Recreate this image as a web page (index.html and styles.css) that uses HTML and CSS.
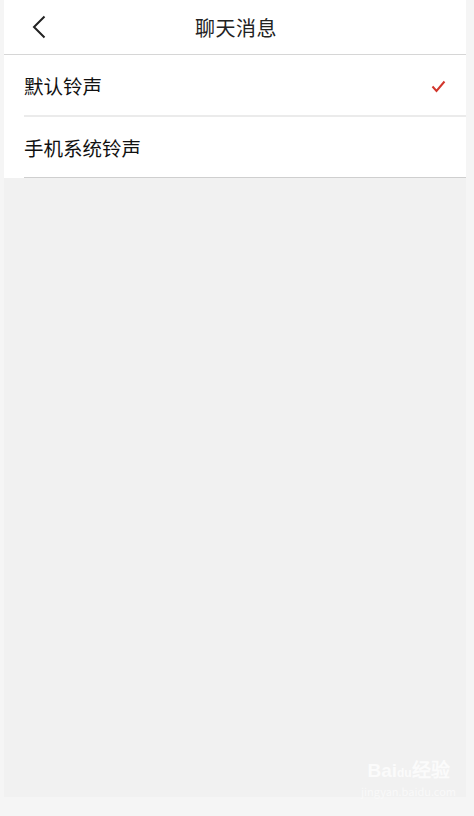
FILE: index.html
```html
<!DOCTYPE html>
<html lang="zh-CN">
<head>
    <meta charset="UTF-8">
    <meta name="viewport" content="width=device-width, initial-scale=1.0">
    <title>聊天消息</title>
    <link rel="stylesheet" href="styles.css">
</head>
<body>
    <div class="screen">
        <header class="top-bar">
            <span class="back">
                <svg width="14" height="24" viewBox="0 0 14 24"><path d="M12.5 1.5 L2 12 L12.5 22.5" fill="none" stroke="#222" stroke-width="2"/></svg>
            </span>
            <h1>聊天消息</h1>
        </header>
        <ul class="tone-list">
            <li class="tone-item">
                <span>默认铃声</span>
                <svg class="check" width="15" height="13" viewBox="0 0 15 13"><path d="M1.5 6.5 L5.5 11 L13.5 1.5" fill="none" stroke="#d2362c" stroke-width="2"/></svg>
            </li>
            <li class="tone-item last">
                <span>手机系统铃声</span>
            </li>
        </ul>
        <div class="watermark">
            <div class="wm-logo">Bai<span class="paw">du</span>经验</div>
            <div class="wm-url">jingyan.baidu.com</div>
        </div>
    </div>
</body>
</html>
```

FILE: styles.css
```css
html, body {
    margin: 0;
    padding: 0;
}
body {
    font-family: "Noto Sans CJK SC", "Noto Sans", sans-serif;
    background-color: #f5f5f5;
    width: 474px;
    height: 816px;
    overflow: hidden;
}
.screen {
    margin-left: 4px;
    width: 462px;
    height: 797px;
    background-color: #f1f1f1;
    position: relative;
}
.top-bar {
    height: 54px;
    background-color: #fff;
    border-bottom: 1px solid #d6d6d6;
    display: flex;
    align-items: center;
    justify-content: center;
    position: relative;
}
.top-bar h1 {
    margin: 0;
    font-size: 20px;
    font-weight: normal;
    color: #222;
    letter-spacing: 0.5px;
    padding-left: 2px;
}
.back {
    position: absolute;
    left: 28px;
    top: 15px;
    height: 24px;
}
.tone-list {
    list-style: none;
    margin: 0;
    padding: 0 0 0 20px;
    background-color: #fff;
}
.tone-item {
    height: 60px;
    display: flex;
    align-items: center;
    justify-content: space-between;
    border-bottom: 2px solid #ebebeb;
    font-size: 19.5px;
    color: #111;
}
.tone-item.last {
    border-bottom: 1px solid #cfcfcf;
}
.check {
    margin-right: 20px;
    margin-top: 2px;
}
.watermark {
    position: absolute;
    left: 357px;
    top: 760px;
    text-align: center;
}
.wm-logo {
    font-family: "Liberation Sans", sans-serif;
    font-weight: bold;
    font-size: 19px;
    line-height: 22px;
    color: #fbfbfb;
}
.wm-logo .paw {
    font-size: 12px;
}
.wm-url {
    font-size: 11px;
    line-height: 14px;
    color: #f9f9f9;
}
```
